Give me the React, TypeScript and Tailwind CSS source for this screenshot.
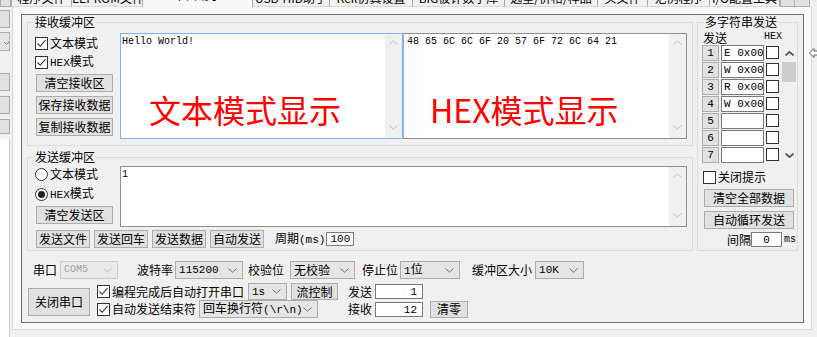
import React from 'react';

const cjk = "font-['Noto_Sans_CJK_SC',sans-serif]";
const mono = "font-['Liberation_Mono','Noto_Sans_CJK_SC',monospace]";

type P = { className?: string; children?: React.ReactNode };

function Chev({ up = false, color = '#6d6d6d', sw = 1 }: { up?: boolean; color?: string; sw?: number }) {
  return (
    <svg width="9" height="5" viewBox="0 0 9 5" className="block">
      <path d={up ? 'M0.5 4.5L4.5 0.8L8.5 4.5' : 'M0.5 0.5L4.5 4.2L8.5 0.5'} fill="none" stroke={color} strokeWidth={sw} />
    </svg>
  );
}

function Btn({ className = '', children }: P) {
  return (
    <button
      type="button"
      className={`flex items-center justify-center shrink-0 bg-[#e1e1e1] border border-[#adadad] leading-[14px] whitespace-nowrap ${className}`}
    >
      {children}
    </button>
  );
}

function Box({ checked }: { checked?: boolean }) {
  return (
    <span className="w-[13px] h-[13px] shrink-0 border border-[#333333] bg-white flex items-center justify-center">
      {checked && (
        <svg width="11" height="11" viewBox="0 0 11 11">
          <path d="M1.5 5.5L4.2 8.3L9.5 2.2" fill="none" stroke="#333333" strokeWidth="1.1" />
        </svg>
      )}
    </span>
  );
}

function Check({ checked, className = '', children }: P & { checked?: boolean }) {
  return (
    <div className={`flex items-center h-[14px] ${className}`}>
      <Box checked={checked} />
      <span className="ml-[2px] leading-[14px] whitespace-nowrap">{children}</span>
    </div>
  );
}

function Radio({ checked, className = '', children }: P & { checked?: boolean }) {
  return (
    <div className={`flex items-center h-[14px] ${className}`}>
      <span className="w-[13px] h-[13px] shrink-0 rounded-full border border-[#333333] bg-white flex items-center justify-center">
        {checked && <span className="w-[7px] h-[7px] rounded-full bg-[#222222]" />}
      </span>
      <span className="ml-[2px] leading-[14px] whitespace-nowrap">{children}</span>
    </div>
  );
}

function Sel({ className = '', children, disabled }: P & { disabled?: boolean }) {
  return (
    <div
      className={`flex items-center justify-between shrink-0 border pl-[3px] pr-[5px] leading-[14px] whitespace-nowrap ${
        disabled ? 'bg-[#eaeaea] border-[#cccccc] text-[#a0a0a0]' : 'bg-[#e5e5e5] border-[#acacac]'
      } ${className}`}
    >
      <span>{children}</span>
      <Chev color={disabled ? '#c0c0c0' : '#707070'} />
    </div>
  );
}

function Field({ className = '', children }: P) {
  return (
    <div className={`shrink-0 bg-white border border-[#7a7a7a] leading-[13px] text-[11px] ${mono} ${className}`}>
      {children}
    </div>
  );
}

function Group({ title, className = '', children }: P & { title: string }) {
  return (
    <fieldset className={`border border-[#dcdcdc] min-w-0 ${className}`}>
      <legend className="ml-[6px] px-[1px] h-[14px] leading-[13px]">{title}</legend>
      {children}
    </fieldset>
  );
}

function Area({ className = '', children }: P) {
  return (
    <div className={`flex shrink-0 bg-white border ${className}`}>
      <div className="flex-1 min-w-0 overflow-hidden">{children}</div>
      <div className="w-[17px] bg-[#f0f0f0] flex flex-col items-center justify-between pt-[6px] pb-[8px]">
        <Chev up color="#c2c2c2" />
        <Chev color="#c2c2c2" />
      </div>
    </div>
  );
}

const Hex = ({ children }: P) => <span className={`${mono} text-[11px]`}>{children}</span>;

function Tab({ className = '', label, selected }: { className?: string; label: string; selected?: boolean }) {
  return (
    <div
      className={`h-[7px] shrink-0 overflow-hidden border-r border-[#a9a9a9] ${
        selected ? 'bg-[#f9f9f9]' : 'bg-[#f0f0f0] border-b border-b-[#d9d9d9]'
      } ${className}`}
    >
      <div className={`h-[14px] leading-[14px] text-center whitespace-nowrap ${selected ? '-mt-[12px]' : '-mt-[9px]'}`}>
        {label}
      </div>
    </div>
  );
}

const multiRows = ['E 0x00', 'W 0x00', 'R 0x00', 'W 0x00', '', '', ''];

export default function App() {
  return (
    <div className={`w-[817px] h-[337px] bg-[#f0f0f0] overflow-hidden relative text-[12px] text-black ${cjk}`}>
      {/* tab strip, cut at the top */}
      <div className="h-[7px] flex overflow-hidden">
        <div className="w-[11px] h-[7px] shrink-0 border border-t-0 border-[#adadad] bg-[#e1e1e1]" />
        <Tab className="w-[61px] border-l border-l-[#a9a9a9]" label="程序文件" />
        <Tab className="w-[71px]" label="EEPROM文件" />
        <Tab className="w-[110px]" label="串口助手" selected />
        <Tab className="w-[77px]" label="USB-HID助手" />
        <Tab className="w-[83px]" label="Keil仿真设置" />
        <Tab className="w-[92px]" label="BIG被计数字库" />
        <Tab className="w-[93px]" label="选型/价格/样品" />
        <Tab className="w-[50px]" label="头文件" />
        <Tab className="w-[62px]" label="范例程序" />
        <Tab className="w-[70px]" label="I/O配置工具" />
        <div className="w-[15px] h-[7px] shrink-0 border border-t-0 border-[#adadad] bg-[#e1e1e1]" />
        <div className="w-[15px] h-[7px] shrink-0 border border-t-0 border-l-0 border-[#adadad] bg-[#e1e1e1]" />
      </div>

      <div className="flex">
        {/* partial controls of the panel to the left */}
        <div className="w-[12px] shrink-0 flex flex-col">
          <div className="mt-[3px] w-[10px] h-[18px] border border-l-0 border-[#adadad] bg-[#e1e1e1]" />
          <div className="mt-[4px] w-[10px] h-[19px] border border-l-0 border-[#adadad] bg-[#e5e5e5] flex items-end justify-end pb-[5px]">
            <svg width="5" height="3" viewBox="0 0 5 3">
              <path d="M0 0L2.5 2.5L5 0" fill="none" stroke="#707070" />
            </svg>
          </div>
          <div className="mt-[22px] w-[10px] h-[18px] border border-l-0 border-[#adadad] bg-[#e1e1e1]" />
          <div className="mt-[5px] w-[10px] h-[18px] border border-l-0 border-[#adadad] bg-[#e1e1e1]" />
          <div className="mt-[5px] w-[10px] h-[15px] border border-l-0 border-[#adadad] bg-[#e1e1e1]" />
          <div className="mt-[5px] w-[10px] h-[200px] border-r border-[#d0d0d0] bg-white" />
        </div>

        {/* tab page */}
        <div className="w-[800px] h-[323px] shrink-0 border border-t-0 border-[#d9d9d9] bg-[#f9f9f9] pl-[8px] pt-[7px]">
          <div className="w-[783px] h-[309px] border border-[#6f6f6f] bg-[#f0f0f0]">
            <div className="flex pl-[5px]">
              <div className="w-[666px] shrink-0 flex flex-col">
                {/* receive buffer */}
                <Group title="接收缓冲区" className="h-[131px]">
                  <div className="flex pt-[4px] pl-[7px]">
                    <div className="w-[78px] shrink-0 flex flex-col">
                      <Check checked className="mt-[3px]">文本模式</Check>
                      <Check checked className="mt-[5px]">
                        <Hex>HEX</Hex>模式
                      </Check>
                      <Btn className="mt-[5px] ml-[1px] w-[77px] h-[18px]">清空接收区</Btn>
                      <Btn className="mt-[4px] ml-[1px] w-[77px] h-[18px]">保存接收数据</Btn>
                      <Btn className="mt-[4px] ml-[1px] w-[77px] h-[18px]">复制接收数据</Btn>
                    </div>
                    <Area className="ml-[7px] w-[283px] h-[106px] border-[#7eb4ea]">
                      <div className={`${mono} text-[10px] leading-[12px] pt-[2px] pl-[1px] whitespace-nowrap`}>
                        Hello World!
                      </div>
                      <div className="ml-[28px] mt-[45px] text-[32px] leading-[32px] text-[#ff0000] whitespace-nowrap">
                        文本模式显示
                      </div>
                    </Area>
                    <Area className="w-[284px] h-[106px] border-[#8f8f8f] border-l-[#7eb4ea]">
                      <div className={`${mono} text-[10px] leading-[12px] pt-[2px] pl-[3px] whitespace-nowrap`}>
                        48 65 6C 6C 6F 20 57 6F 72 6C 64 21
                      </div>
                      <div className="ml-[26px] mt-[45px] text-[32px] leading-[32px] text-[#ff0000] whitespace-nowrap">
                        HEX模式显示
                      </div>
                    </Area>
                  </div>
                </Group>

                {/* send buffer */}
                <Group title="发送缓冲区" className="h-[101px] mt-[4px]">
                  <div className="flex pt-[2px] pl-[7px]">
                    <div className="w-[78px] shrink-0 flex flex-col">
                      <Radio className="mt-[1px]">文本模式</Radio>
                      <Radio checked className="mt-[6px]">
                        <Hex>HEX</Hex>模式
                      </Radio>
                      <Btn className="mt-[5px] ml-[1px] w-[77px] h-[18px]">清空发送区</Btn>
                    </div>
                    <Area className="ml-[7px] w-[567px] h-[61px] border-[#8f8f8f]">
                      <div className={`${mono} text-[10px] leading-[12px] pt-[2px] pl-[1px]`}>1</div>
                    </Area>
                  </div>
                  <div className="flex items-center pl-[8px] mt-[3px] h-[18px]">
                    <Btn className="w-[54px] h-[18px]">发送文件</Btn>
                    <Btn className="ml-[4px] w-[54px] h-[18px]">发送回车</Btn>
                    <Btn className="ml-[4px] w-[54px] h-[18px]">发送数据</Btn>
                    <Btn className="ml-[4px] w-[54px] h-[18px]">自动发送</Btn>
                    <span className="ml-[11px] leading-[14px] whitespace-nowrap">
                      周期<Hex>(ms)</Hex>
                    </span>
                    <Field className="ml-[1px] w-[28px] h-[14px] text-center">100</Field>
                  </div>
                </Group>
              </div>

              {/* multi string send */}
              <Group title="多字符串发送" className="ml-[4px] w-[101px] h-[236px] shrink-0">
                <div className="pl-[4px] pt-[1px]">
                  <div className="flex items-center h-[14px]">
                    <span className="ml-[1px] leading-[13px]">发送</span>
                    <span className={`ml-[37px] ${mono} text-[10px] leading-[12px]`}>HEX</span>
                  </div>
                  <div className="flex mt-[1px]">
                    <div className="flex flex-col">
                      {multiRows.map((v, i) => (
                        <div key={i} className="flex h-[17px]">
                          <Btn className={`w-[17px] h-[16px] ${mono} text-[11px]`}>{i + 1}</Btn>
                          <Field className="ml-[2px] w-[43px] h-[16px] pl-[2px] pt-[1px] text-[10px] whitespace-nowrap">
                            {v}
                          </Field>
                          <div className="ml-[2px] mt-[1px]">
                            <Box />
                          </div>
                        </div>
                      ))}
                    </div>
                    <div className="ml-[3px] w-[14px] h-[119px] bg-[#f0f0f0] flex flex-col">
                      <div className="h-[17px] flex items-center justify-center">
                        <Chev up color="#505050" sw={1.6} />
                      </div>
                      <div className="h-[20px] bg-[#cdcdcd]" />
                      <div className="flex-1" />
                      <div className="h-[17px] flex items-center justify-center">
                        <Chev color="#505050" sw={1.6} />
                      </div>
                    </div>
                  </div>
                  <Check className="mt-[6px] ml-[1px]">关闭提示</Check>
                  <Btn className="mt-[5px] ml-[2px] w-[90px] h-[18px]">清空全部数据</Btn>
                  <Btn className="mt-[4px] ml-[2px] w-[90px] h-[18px]">自动循环发送</Btn>
                  <div className="flex items-center mt-[3px] h-[15px]">
                    <span className="ml-[25px] leading-[14px]">间隔</span>
                    <Field className="w-[31px] h-[15px] text-center pt-[1px]">0</Field>
                    <span className={`ml-[2px] ${mono} text-[10px]`}>ms</span>
                  </div>
                </div>
              </Group>
            </div>

            {/* port settings */}
            <div className="flex items-center mt-[10px] h-[18px] whitespace-nowrap">
              <span className="ml-[11px] leading-[14px]">串口</span>
              <Sel disabled className={`ml-[3px] w-[58px] h-[18px] ${mono} text-[10px]`}>COM5</Sel>
              <span className="ml-[19px] leading-[14px]">波特率</span>
              <Sel className={`ml-[2px] w-[68px] h-[18px] ${mono} text-[11px]`}>115200</Sel>
              <span className="ml-[5px] leading-[14px]">校验位</span>
              <Sel className="ml-[6px] w-[65px] h-[18px]">无校验</Sel>
              <span className="ml-[7px] leading-[14px]">停止位</span>
              <Sel className="ml-[2px] w-[60px] h-[18px]">
                <Hex>1</Hex>位
              </Sel>
              <span className="ml-[12px] leading-[14px]">缓冲区大小</span>
              <Sel className={`ml-[3px] w-[49px] h-[18px] ${mono} text-[11px]`}>10K</Sel>
            </div>

            <div className="flex mt-[4px] whitespace-nowrap">
              <Btn className="ml-[6px] mt-[5px] w-[62px] h-[28px]">关闭串口</Btn>
              <div className="ml-[7px] flex flex-col">
                <div className="flex items-center h-[17px]">
                  <Check checked>编程完成后自动打开串口</Check>
                  <Sel className={`ml-[4px] w-[39px] h-[17px] ${mono} text-[11px]`}>1s</Sel>
                  <Btn className="ml-[4px] w-[47px] h-[17px]">流控制</Btn>
                  <span className="ml-[10px] leading-[14px]">发送</span>
                  <Field className="ml-[3px] w-[48px] h-[15px] text-right pr-[5px] pt-[1px]">1</Field>
                </div>
                <div className="flex items-center h-[18px]">
                  <Check checked>自动发送结束符</Check>
                  <Sel className="ml-[3px] w-[119px] h-[18px]">
                    回车换行符<Hex>(\r\n)</Hex>
                  </Sel>
                  <span className="ml-[30px] leading-[14px]">接收</span>
                  <Field className="ml-[3px] w-[48px] h-[15px] text-right pr-[5px] pt-[1px]">12</Field>
                  <Btn className="ml-[7px] w-[38px] h-[17px]">清零</Btn>
                </div>
              </div>
            </div>
          </div>
        </div>
      </div>

      {/* cursor-like arrow at the right edge */}
      <svg className="absolute left-[809px] top-[47px]" width="9" height="12" viewBox="0 0 9 12">
        <path d="M0.5 6L5 1.5V4H8.5V8H5V10.5Z" fill="#ffffff" stroke="#606060" strokeWidth="1" />
      </svg>
    </div>
  );
}
